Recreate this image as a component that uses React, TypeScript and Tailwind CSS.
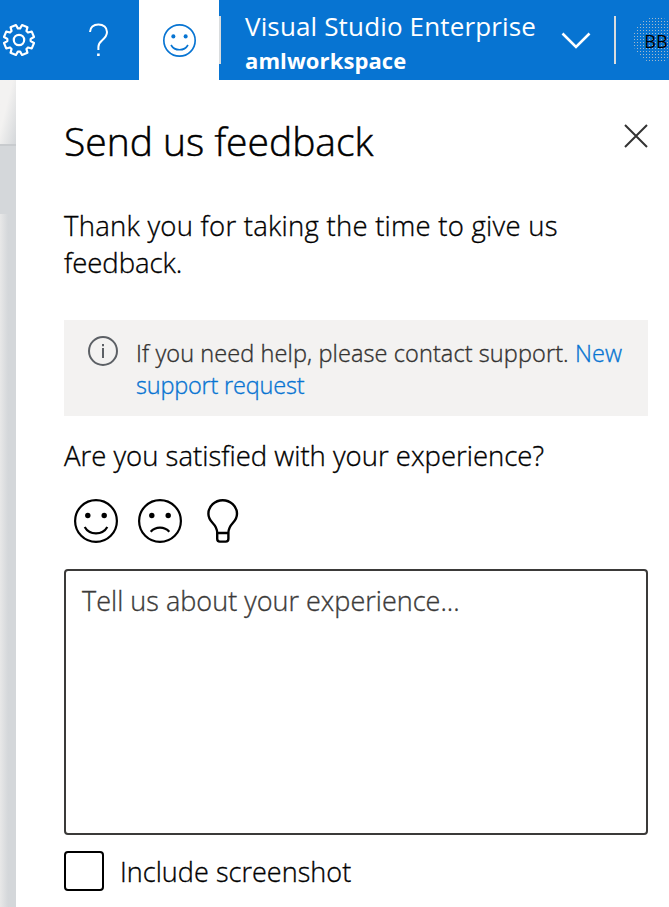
const point = (radius: number, degrees: number) => {
  const a = (degrees * Math.PI) / 180;
  return `${(17 + radius * Math.sin(a)).toFixed(2)} ${(17 - radius * Math.cos(a)).toFixed(2)}`;
};

const gearPath =
  Array.from({ length: 8 }, (_, i) => {
    const c = 22.5 + i * 45;
    return `${i === 0 ? "M" : "L"}${point(11.7, c - 17)} L${point(15.3, c - 11)} L${point(15.3, c + 11)} L${point(11.7, c + 17)}`;
  }).join(" ") + " Z";

function Gear() {
  return (
    <svg width="34" height="34" viewBox="0 0 34 34" fill="none" stroke="#fff" strokeWidth="2.2" strokeLinejoin="round">
      <path d={gearPath} />
      <circle cx="17" cy="17" r="5.2" />
    </svg>
  );
}

function Face({ size, sad = false, className = "" }: { size: number; sad?: boolean; className?: string }) {
  return (
    <svg width={size} height={size} viewBox="0 0 44 44" fill="none" stroke="currentColor" strokeWidth="2.2" className={className}>
      <circle cx="22" cy="22" r="20.9" />
      <circle cx="13.8" cy="16.5" r="2.7" fill="currentColor" stroke="none" />
      <circle cx="30.2" cy="16.5" r="2.7" fill="currentColor" stroke="none" />
      {sad ? <path d="M12.7 32.8 C17.5 27.3 26.5 27.3 31.3 32.8" /> : <path d="M10.7 28 C15.5 36.5 28.5 36.5 33.3 28" />}
    </svg>
  );
}

function Header() {
  return (
    <header className="flex h-20 w-[669px] overflow-hidden bg-[#0774d2] text-white">
      <div className="flex w-[139px] shrink-0 items-center pl-[2px]">
        <Gear />
        <svg width="22" height="34" viewBox="0 0 22 34" fill="none" stroke="#fff" strokeWidth="2" className="ml-[52px]">
          <path d="M2 9 C2 4.5 5.5 1.5 10.4 1.5 C15.5 1.5 19 4.6 19 9 C19 13 16.8 15 14.2 17.2 C11.5 19.4 10.4 20.8 10.4 24 V27" />
          <path d="M10.4 30.5 V33" strokeWidth="2.6" />
        </svg>
      </div>
      <div className="flex w-20 shrink-0 items-center justify-center bg-white text-[#0774d2]">
        <Face size={33} />
      </div>
      <div className="mt-4 h-12 w-[2px] shrink-0 bg-[#d9dcde]" />
      <div className="w-[316px] shrink-0 whitespace-nowrap pl-6">
        <div className="mt-2 text-[26px] leading-9 tracking-[0.15px]">Visual Studio Enterprise</div>
        <div className="text-[22px] font-bold leading-8 tracking-[0.1px]">amlworkspace</div>
      </div>
      <svg width="30" height="20" viewBox="0 0 30 20" fill="none" stroke="#fff" strokeWidth="2.6" className="ml-[24px] mt-[31px] shrink-0">
        <path d="M1.5 2.5 L15 16 L28.5 2.5" />
      </svg>
      <div className="ml-[23px] mt-4 h-12 w-[2px] shrink-0 bg-[#d9dcde]" />
      <div className="ml-[17px] mt-[17px] flex size-[46px] shrink-0 items-center justify-center rounded-full bg-[radial-gradient(circle,#a4b9cb_0.7px,transparent_1px)] bg-size-[3px_3px] text-[18px] text-black">
        <span className="mt-[2px]">BB</span>
      </div>
    </header>
  );
}

export default function App() {
  return (
    <div className="h-[907px] w-[669px] overflow-hidden bg-white font-['Open_Sans','Noto_Sans',sans-serif] text-black">
      <Header />
      <div className="flex h-[827px] font-light [-webkit-text-stroke:0.35px_currentColor]">
        <aside className="flex w-4 shrink-0 flex-col">
          <div className="h-16 bg-linear-to-br from-[#f3f2f1] from-40% to-[#d4d7da]" />
          <div className="h-[2px] bg-[#c8cbce]" />
          <div className="h-[68px] bg-[#d4d7da]" />
          <div className="flex-1 bg-linear-to-r from-[#e8e8e8] to-[#d4d7da] to-50%" />
        </aside>
        <main className="flex flex-1 flex-col whitespace-nowrap pl-12 pr-[21px]">
          <div className="flex h-[123px] items-start justify-between">
            <h1 className="mt-[33px] text-[39px] font-light leading-[56px] tracking-[0px] [-webkit-text-stroke:0.5px_currentColor]">Send us feedback</h1>
            <svg width="26" height="26" viewBox="0 0 26 26" stroke="#333" strokeWidth="2" className="mt-[43px] mr-[-1px]">
              <path d="M2 2 L24 24 M24 2 L2 24" />
            </svg>
          </div>
          <p className="mt-[4px] text-[27.5px] leading-[37px] tracking-[0.25px]">
            Thank you for taking the time to give us<br /><span className="tracking-[-0.05px]">feedback.</span>
          </p>
          <div className="mt-[39px] flex h-24 shrink-0 bg-[#f3f2f1] pl-6 text-[23.5px] leading-8 text-[#323130]">
            <svg width="30" height="30" viewBox="0 0 30 30" fill="none" stroke="#5c6065" strokeWidth="2" className="mt-4 shrink-0">
              <circle cx="15" cy="15" r="14" />
              <path d="M15 12 V22 M15 8 V10.3" />
            </svg>
            <p className="ml-[18px] mt-[17px] tracking-[0.1px]">
              If you need help, please contact support. <a className="text-[#0774d2]">New<br /><span className="tracking-[-0.2px]">support request</span></a>
            </p>
          </div>
          <p className="mt-[21px] text-[27.5px] leading-[38px]">Are you satisfied with your experience?</p>
          <div className="mt-[24px] flex h-11 shrink-0 pl-[10px]">
            <Face size={44} />
            <Face size={44} sad className="ml-5" />
            <svg width="32" height="44" viewBox="0 0 32 44" fill="none" stroke="#000" strokeWidth="2.4" className="ml-[25px]">
              <path d="M10.2 34 C10.2 23.5 1.4 24.5 1.4 14.7 C1.4 7.2 8 1.2 15.7 1.2 C23.4 1.2 30 7.2 30 14.7 C30 24.5 21.4 23.5 21.4 34 M10.2 34 H21.4 V39.8 Q21.4 42.6 18.7 42.6 H12.9 Q10.2 42.6 10.2 39.8 Z" />
            </svg>
          </div>
          <div className="mt-[26px] h-[266px] shrink-0 rounded-[4px] border-2 border-[#3b3a39] pl-4 pt-[11px] text-[27px] leading-[38px] tracking-[0.02px] text-[#3b3a39]">
            Tell us about your experience...
          </div>
          <label className="mt-4 flex h-10 items-start text-[27px] leading-10 tracking-[0.05px]">
            <span className="size-10 rounded-[4px] border-2 border-black" />
            <span className="ml-4 mt-[1px]">Include screenshot</span>
          </label>
        </main>
      </div>
    </div>
  );
}
